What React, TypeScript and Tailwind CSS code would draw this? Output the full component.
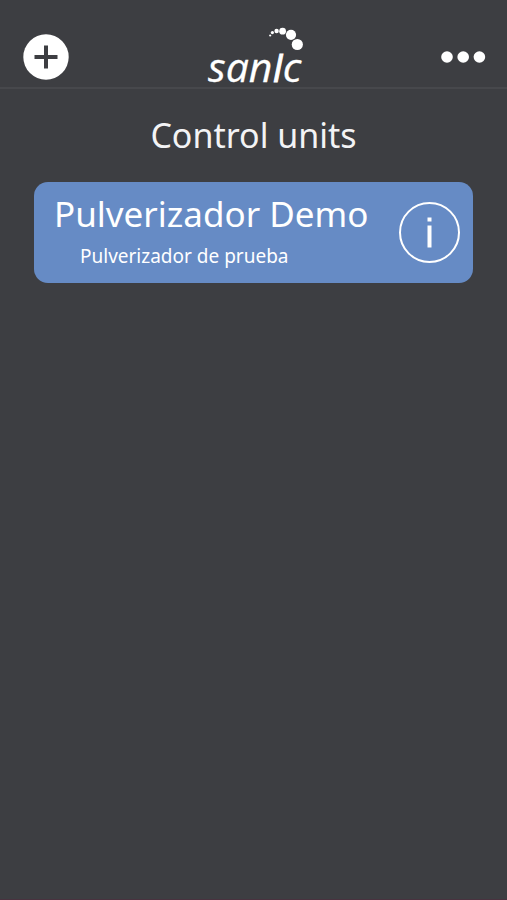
function Logo() {
  return (
    <svg viewBox="0 0 104 80" className="-mb-4 h-20 w-[104px] overflow-visible" role="img" aria-label="sanIc">
      <g fill="#fff">
        <circle cx="68.2" cy="12.5" r="1.1" />
        <circle cx="70.4" cy="9.6" r="1.6" />
        <circle cx="74.6" cy="8" r="2.2" />
        <circle cx="80.6" cy="8.2" r="3.4" />
        <circle cx="89" cy="11.8" r="5.1" />
        <circle cx="95.3" cy="21.5" r="5.6" />
        <text x="6" y="59" fontSize="41" fontStyle="italic" fontFamily="'Open Sans', 'Noto Sans', sans-serif" stroke="#fff" strokeWidth="0.3">
          san<tspan fontSize="38" strokeWidth="1">I</tspan>c
        </text>
      </g>
    </svg>
  );
}

function AddIcon() {
  return (
    <svg viewBox="0 0 46 46" className="size-[46px]" aria-hidden="true">
      <circle cx="23" cy="23" r="22.7" fill="#fff" />
      <path d="M23 11.5v23M11.5 23h23" stroke="#3d3e42" strokeWidth="4" />
    </svg>
  );
}

function MoreIcon() {
  return (
    <svg viewBox="0 0 46 12" className="h-3 w-[46px]" fill="#fff" aria-hidden="true">
      <circle cx="6" cy="6" r="5.8" />
      <circle cx="22.2" cy="6" r="5.8" />
      <circle cx="38.4" cy="6" r="5.8" />
    </svg>
  );
}

function InfoIcon() {
  return (
    <svg viewBox="0 0 62 62" className="size-[62px]" fill="none" stroke="#fff" aria-hidden="true">
      <circle cx="31.5" cy="30.5" r="29.5" strokeWidth="2" />
      <path d="M31.5 23.5v22" strokeWidth="4" />
      <rect x="29.5" y="15.5" width="4" height="4" fill="#fff" stroke="none" />
    </svg>
  );
}

export default function App() {
  return (
    <div className="flex min-h-screen flex-col border-b border-[#49323f] bg-[#3d3e42] font-['Noto_Sans','Open_Sans',sans-serif] text-white">
      <header className="grid h-[89px] grid-cols-[1fr_auto_1fr] items-end border-b-2 border-[#47484c] px-5">
        <button type="button" aria-label="Add control unit" className="mb-[7px] ml-[3px] justify-self-start">
          <AddIcon />
        </button>
        <Logo />
        <button type="button" aria-label="More options" className="mb-2 flex h-11 items-center justify-self-end">
          <MoreIcon />
        </button>
      </header>
      <main className="flex flex-col px-[34px]">
        <h1 className="mt-[21px] text-center text-[34px] leading-[50px] text-[#f3f3f5]">Control units</h1>
        <section className="mt-[22px] flex h-[101px] items-center rounded-[14px] bg-[#668bc5] pr-[13px] pl-5">
          <div className="min-w-0 flex-1 pb-[3px]">
            <h2 className="text-[35px] leading-[50px] whitespace-nowrap">Pulverizador Demo</h2>
            <p className="pl-[26px] text-[19px] leading-[34px]">Pulverizador de prueba</p>
          </div>
          <button type="button" aria-label="Information">
            <InfoIcon />
          </button>
        </section>
      </main>
    </div>
  );
}
